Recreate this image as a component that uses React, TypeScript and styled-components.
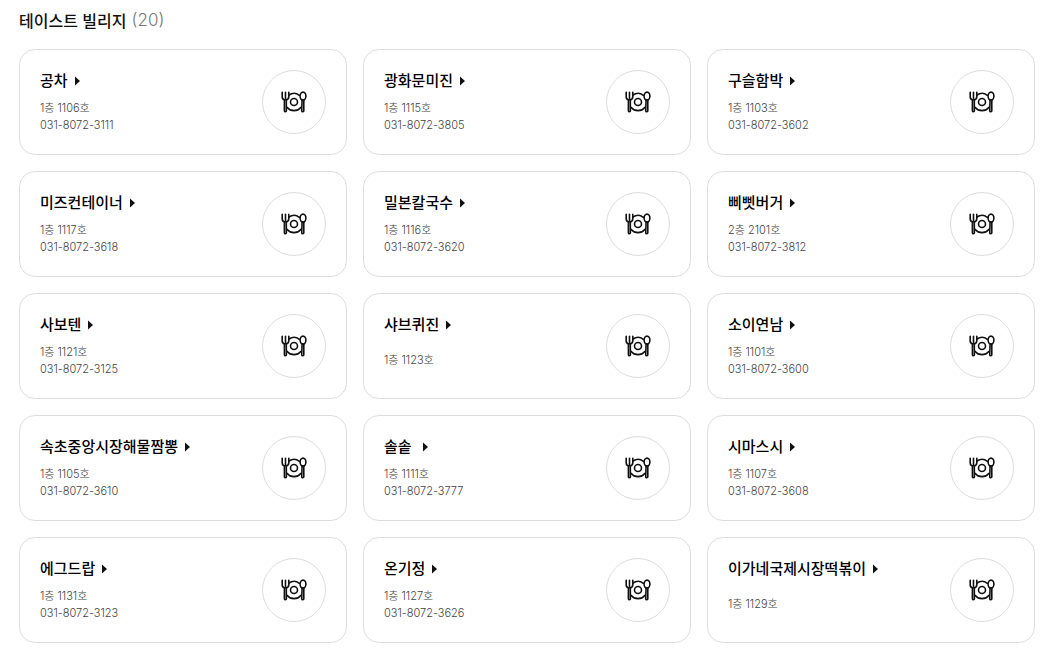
import React from "react";
import styled, { createGlobalStyle } from "styled-components";

const GlobalStyle = createGlobalStyle`
  * { box-sizing: border-box; }
  body {
    margin: 0;
    background: #fff;
    color: #000;
    font-family: Inter, "Noto Sans CJK KR", sans-serif;
  }
  h2, h3, p, ul { margin: 0; padding: 0; }
`;

const Page = styled.main`
  padding: 8px 15px 10px 19px;
`;

const Heading = styled.h2`
  display: flex;
  align-items: center;
  gap: 5px;
  height: 24px;
  margin-bottom: 17px;
  font-size: 17px;
  font-weight: 500;
  line-height: 24px;
  color: #111;
`;

const HeadingText = styled.span`
  font-family: "Noto Sans CJK KR", sans-serif;
  font-size: 16px;
`;

const Count = styled.span`
  font-weight: 300;
  color: #777;
`;

const Grid = styled.ul`
  display: grid;
  grid-template-columns: repeat(3, minmax(0, 1fr));
  gap: 16px;
  list-style: none;
`;

const Card = styled.li`
  display: flex;
  align-items: center;
  justify-content: space-between;
  padding: 20px;
  border: 1px solid #ddd;
  border-radius: 16px;
`;

const Details = styled.div`
  min-width: 0;
`;

const Name = styled.h3`
  font-size: 15px;
  font-weight: 500;
  line-height: 20px;
`;

const NameLink = styled.a`
  display: inline-flex;
  align-items: center;
  gap: 7px;
  color: inherit;
  text-decoration: none;
  white-space: pre;
`;

const Info = styled.div`
  display: flex;
  flex-direction: column;
  justify-content: center;
  min-height: 34px;
  margin-top: 9px;
  font-size: 11px;
  font-weight: 300;
  line-height: 17px;
  color: #444;
`;

const Badge = styled.div`
  display: flex;
  flex: none;
  align-items: center;
  justify-content: center;
  width: 64px;
  height: 64px;
  border: 1px solid #ddd;
  border-radius: 50%;
`;

const Arrow = () => (
  <svg width="5" height="10" viewBox="0 0 5 10" aria-hidden="true">
    <path d="M0 0.5 L5 5 L0 9.5 Z" fill="#111" />
  </svg>
);

const DiningIcon = () => (
  <svg
    width="26"
    height="22"
    viewBox="0 0 26 22"
    fill="none"
    stroke="#111"
    strokeWidth="1.6"
    strokeLinecap="round"
    strokeLinejoin="round"
    aria-hidden="true"
  >
    <path d="M8 4 A8.7 8.7 0 0 1 18.4 4.3 M6.2 16.4 A8.7 8.7 0 0 0 19.8 16.4" />
    <circle cx="13" cy="11" r="3.5" />
    <path d="M1.2 1.2 V5.7 Q1.2 8.2 3.4 9 L3.4 19.8 Q3.5 20.7 4.4 20.7 Q5.4 20.7 5.4 19.8 L5.3 9 Q7.8 8.2 7.8 5.7 V1.2 M4.5 1.2 V8.6" />
    <ellipse cx="22" cy="5.1" rx="2.9" ry="4" />
    <path d="M21.1 9 L20.7 19.8 Q20.8 20.7 21.8 20.7 Q22.8 20.7 22.8 19.8 L22.8 9" />
  </svg>
);

type Shop = { name: string; place: string; phone?: string };

const shops: Shop[] = [
  { name: "공차", place: "1층 1106호", phone: "031-8072-3111" },
  { name: "광화문미진", place: "1층 1115호", phone: "031-8072-3805" },
  { name: "구슬함박", place: "1층 1103호", phone: "031-8072-3602" },
  { name: "미즈컨테이너", place: "1층 1117호", phone: "031-8072-3618" },
  { name: "밀본칼국수", place: "1층 1116호", phone: "031-8072-3620" },
  { name: "삐삣버거", place: "2층 2101호", phone: "031-8072-3812" },
  { name: "사보텐", place: "1층 1121호", phone: "031-8072-3125" },
  { name: "샤브퀴진", place: "1층 1123호" },
  { name: "소이연남", place: "1층 1101호", phone: "031-8072-3600" },
  { name: "속초중앙시장해물짬뽕", place: "1층 1105호", phone: "031-8072-3610" },
  { name: "솔솥 ", place: "1층 1111호", phone: "031-8072-3777" },
  { name: "시마스시", place: "1층 1107호", phone: "031-8072-3608" },
  { name: "에그드랍", place: "1층 1131호", phone: "031-8072-3123" },
  { name: "온기정", place: "1층 1127호", phone: "031-8072-3626" },
  { name: "이가네국제시장떡볶이", place: "1층 1129호" },
];

export default function App() {
  return (
    <>
      <GlobalStyle />
      <Page lang="ko">
        <Heading>
          <HeadingText>테이스트 빌리지</HeadingText>
          <Count>(20)</Count>
        </Heading>
        <Grid>
          {shops.map((shop) => (
            <Card key={shop.name}>
              <Details>
                <Name>
                  <NameLink href="#">
                    <span>{shop.name}</span>
                    <Arrow />
                  </NameLink>
                </Name>
                <Info>
                  <p>{shop.place}</p>
                  {shop.phone && <p>{shop.phone}</p>}
                </Info>
              </Details>
              <Badge>
                <DiningIcon />
              </Badge>
            </Card>
          ))}
        </Grid>
      </Page>
    </>
  );
}
